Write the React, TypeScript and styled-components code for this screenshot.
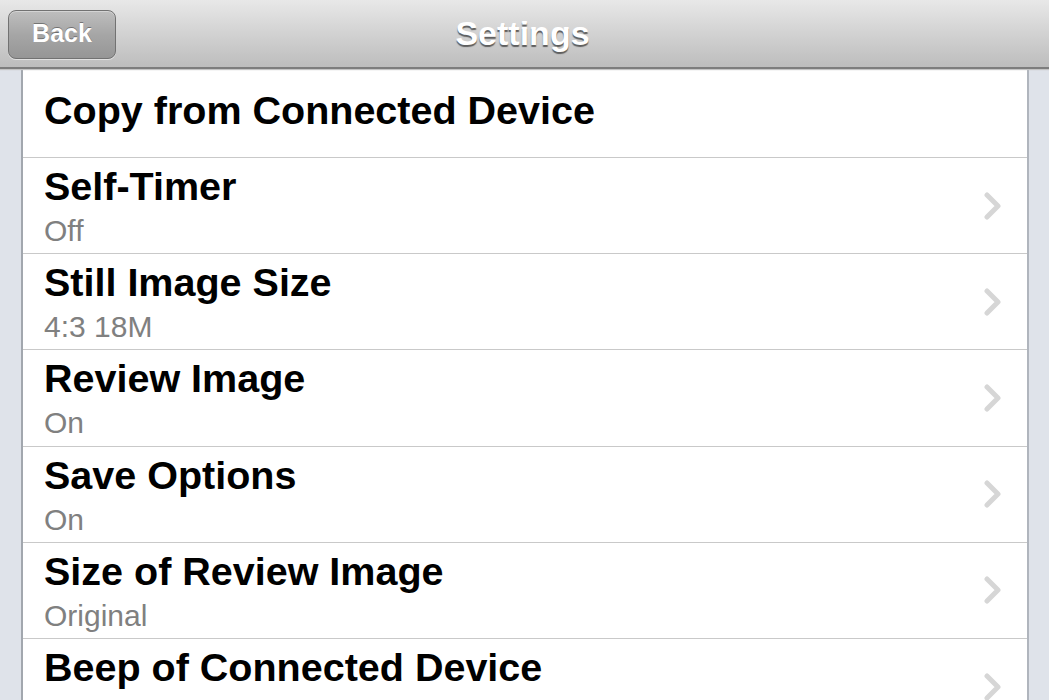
import styled, { createGlobalStyle } from "styled-components";

const items: { title: string; value?: string }[] = [
  { title: "Self-Timer", value: "Off" },
  { title: "Still Image Size", value: "4:3 18M" },
  { title: "Review Image", value: "On" },
  { title: "Save Options", value: "On" },
  { title: "Size of Review Image", value: "Original" },
  { title: "Beep of Connected Device" },
];

const Chevron = () => (
  <svg width="20" height="28" viewBox="0 0 20 28">
    <polyline
      points="4,3 15,14 4,25"
      fill="none"
      stroke="#d6d6d6"
      strokeWidth="5"
      strokeLinecap="round"
      strokeLinejoin="round"
    />
  </svg>
);

const App = () => {
  return (
    <>
      <GlobalStyle />
      <Screen>
        <NavBar>
          <BackButton>Back</BackButton>
          <NavTitle>Settings</NavTitle>
          <span />
        </NavBar>
        <Body>
          <Card>
            <ActionRow>Copy from Connected Device</ActionRow>
            {items.map((item) => (
              <Row key={item.title}>
                <Texts>
                  <Title>{item.title}</Title>
                  {item.value && <Value>{item.value}</Value>}
                </Texts>
                <Chevron />
              </Row>
            ))}
          </Card>
        </Body>
      </Screen>
    </>
  );
};

const GlobalStyle = createGlobalStyle`
  html, body {
    margin: 0;
    padding: 0;
    height: 100%;
    overflow: hidden;
    background: #dfe3ea;
  }
  body {
    font-family: "Liberation Sans", Arial, sans-serif;
  }
`;

const Screen = styled.div`
  width: 1049px;
  height: 700px;
  display: flex;
  flex-direction: column;
  overflow: hidden;
  background: #dfe3ea;
`;

const NavBar = styled.div`
  height: 67px;
  flex-shrink: 0;
  display: grid;
  grid-template-columns: 1fr auto 1fr;
  align-items: center;
  padding: 0 8px;
  background: linear-gradient(#e8e8e8, #d2d2d2 50%, #bdbdbd);
  border-bottom: 2px solid #7d7d7d;
  box-shadow: 0 1px 1px #c4c4c4;
  position: relative;
  z-index: 1;
`;

const BackButton = styled.button`
  justify-self: start;
  width: 108px;
  height: 49px;
  margin-top: 1px;
  padding: 0 0 2px;
  border: 1px solid #727272;
  border-radius: 8px;
  background: linear-gradient(#bebebe, #a6a6a6 50%, #969696);
  box-shadow: inset 0 1px 0 rgba(255, 255, 255, 0.35), 0 1px 0 rgba(255, 255, 255, 0.5);
  color: #fff;
  font-family: "Liberation Sans", Arial, sans-serif;
  font-size: 25px;
  font-weight: 700;
  text-shadow: 0 -1px 0 rgba(0, 0, 0, 0.35);
`;

const NavTitle = styled.div`
  color: #fff;
  font-size: 34px;
  font-weight: 700;
  margin-right: 4px;
  text-shadow: 0 2px 1px #5e5e5e;
`;

const Body = styled.div`
  flex: 1;
  display: flex;
  padding: 0 20px 0 21px;
`;

const Card = styled.div`
  flex: 1;
  background: #fff;
  border-left: 2px solid #a2a7ae;
  border-right: 2px solid #b0b5bd;
  display: flex;
  flex-direction: column;
`;

const ActionRow = styled.div`
  height: 89px;
  box-sizing: border-box;
  flex-shrink: 0;
  padding: 19px 0 0 21px;
  font-size: 39.5px;
  line-height: 44px;
  font-weight: 700;
  color: #000;
  border-bottom: 1px solid #c9c9c9;
`;

const Row = styled.div`
  height: 96.2px;
  box-sizing: border-box;
  flex-shrink: 0;
  display: flex;
  align-items: center;
  justify-content: space-between;
  padding: 0 24px 0 21px;
  border-bottom: 1px solid #c9c9c9;
`;

const Texts = styled.div`
  display: flex;
  flex-direction: column;
  align-self: flex-start;
  padding-top: 6px;
`;

const Title = styled.div`
  font-size: 39.5px;
  line-height: 44px;
  font-weight: 700;
  color: #000;
`;

const Value = styled.div`
  margin-top: 6px;
  font-size: 30px;
  line-height: 34px;
  color: #808080;
`;

export default App;
